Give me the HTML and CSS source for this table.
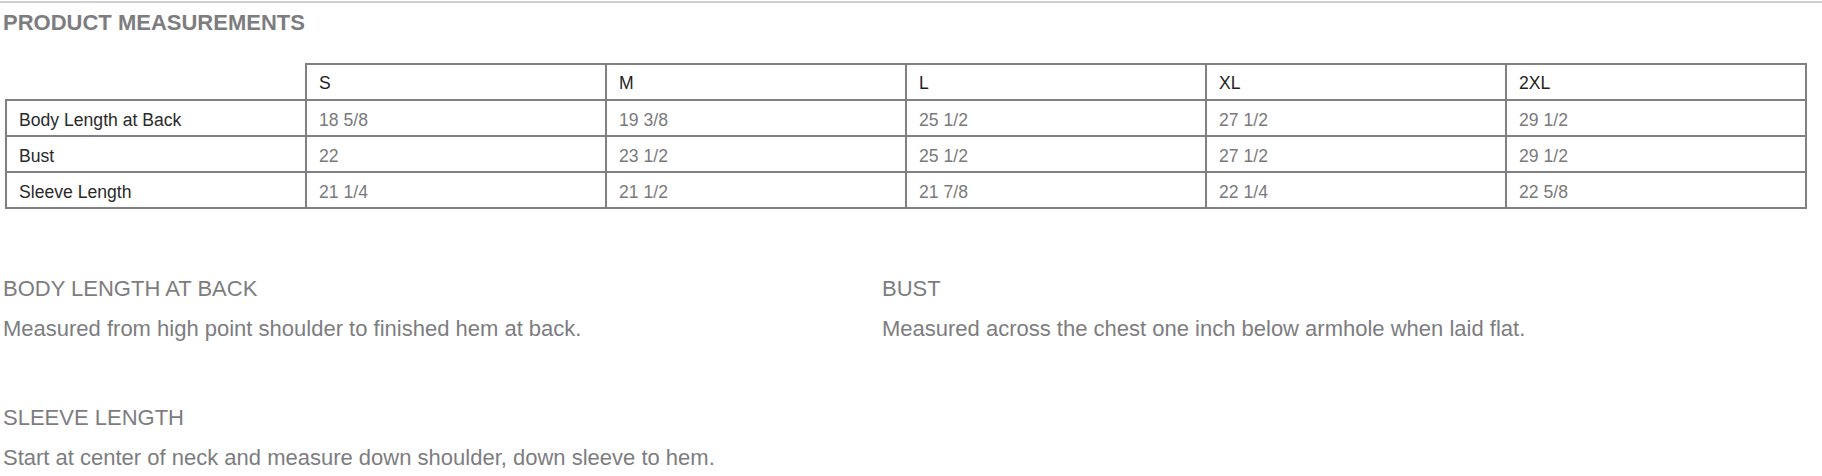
FILE: index.html
```html
<!DOCTYPE html>
<html lang="en">
<head>
<meta charset="utf-8">
<title>Product Measurements</title>
<link rel="stylesheet" href="styles.css">
</head>
<body>
<div class="page">
  <h2 class="title">PRODUCT MEASUREMENTS</h2>
  <table class="size-table">
    <thead>
      <tr>
        <th class="corner"></th>
        <th class="size">S</th>
        <th class="size">M</th>
        <th class="size">L</th>
        <th class="size">XL</th>
        <th class="size">2XL</th>
      </tr>
    </thead>
    <tbody>
      <tr>
        <td class="label">Body Length at Back</td>
        <td>18 5/8</td>
        <td>19 3/8</td>
        <td>25 1/2</td>
        <td>27 1/2</td>
        <td>29 1/2</td>
      </tr>
      <tr>
        <td class="label">Bust</td>
        <td>22</td>
        <td>23 1/2</td>
        <td>25 1/2</td>
        <td>27 1/2</td>
        <td>29 1/2</td>
      </tr>
      <tr>
        <td class="label">Sleeve Length</td>
        <td>21 1/4</td>
        <td>21 1/2</td>
        <td>21 7/8</td>
        <td>22 1/4</td>
        <td>22 5/8</td>
      </tr>
    </tbody>
  </table>
  <div class="desc-grid">
    <div class="desc">
      <h3 class="desc-title">BODY LENGTH AT BACK</h3>
      <p class="desc-text">Measured from high point shoulder to finished hem at back.</p>
    </div>
    <div class="desc">
      <h3 class="desc-title">BUST</h3>
      <p class="desc-text">Measured across the chest one inch below armhole when laid flat.</p>
    </div>
    <div class="desc">
      <h3 class="desc-title">SLEEVE LENGTH</h3>
      <p class="desc-text">Start at center of neck and measure down shoulder, down sleeve to hem.</p>
    </div>
  </div>
</div>
</body>
</html>
```

FILE: styles.css
```css
html, body {
  margin: 0;
  padding: 0;
  background: #ffffff;
}

body {
  font-family: "Liberation Sans", Arial, Helvetica, sans-serif;
  color: #808080;
}

.page {
  border-top: 2px solid #cfcfcf;
  margin-top: 1px;
  padding: 0 3px;
}

.title {
  margin: 7px 0 0 0;
  font-size: 22px;
  font-weight: bold;
  line-height: 25px;
  color: #7d7d7f;
}

.size-table {
  margin: 28px 0 0 2px;
  width: 1802px;
  table-layout: fixed;
  border-collapse: separate;
  border-spacing: 0;
  font-size: 17.6px;
}

.size-table th,
.size-table td {
  box-sizing: border-box;
  text-align: left;
  font-weight: normal;
  padding: 9px 12px 5px 12px;
  line-height: 20px;
  border-right: 2px solid #808083;
  border-bottom: 2px solid #808083;
}

.size-table thead th {
  padding-top: 8px;
  padding-bottom: 6px;
  border-top: 2px solid #808083;
  color: #1f1f1f;
}

.size-table th.corner {
  width: 302px;
  border-top: none;
}

.size-table th.size {
  width: 300px;
}

.size-table td {
  color: #7a7a7c;
}

.size-table td.label {
  border-left: 2px solid #808083;
  color: #2a2a2a;
}

.desc-grid {
  margin-top: 67px;
  display: grid;
  grid-template-columns: 879px 1fr;
  row-gap: 64px;
}

.desc-title {
  margin: 0;
  font-size: 22px;
  font-weight: normal;
  line-height: 25px;
  color: #7d7d7f;
}

.desc-text {
  margin: 15px 0 0 0;
  font-size: 22px;
  line-height: 25px;
  color: #7d7d7f;
}
```
